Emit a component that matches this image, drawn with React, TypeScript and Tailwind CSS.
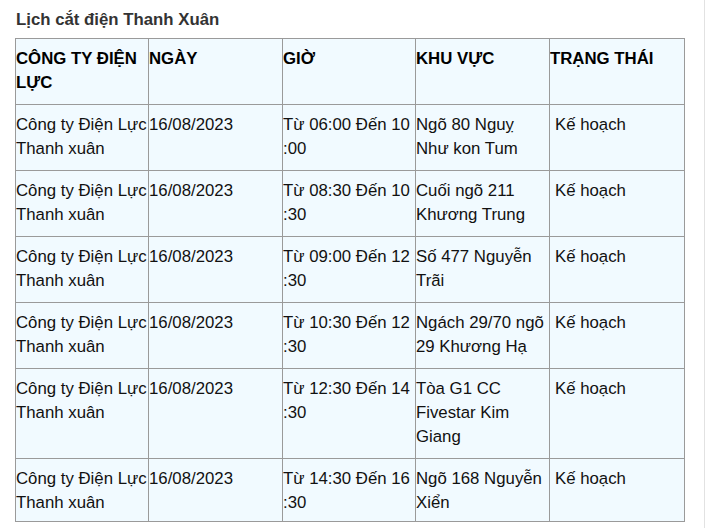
import React from "react";

interface Row {
  company: string[];
  date: string;
  time: string[];
  area: string[];
  status: string;
}

const rows: Row[] = [
  { company: ["Công ty Điện Lực", "Thanh xuân"], date: "16/08/2023", time: ["Từ 06:00 Đến 10", ":00"], area: ["Ngõ 80 Nguỵ", "Như kon Tum"], status: "Kế hoạch" },
  { company: ["Công ty Điện Lực", "Thanh xuân"], date: "16/08/2023", time: ["Từ 08:30 Đến 10", ":30"], area: ["Cuối ngõ 211", "Khương Trung"], status: "Kế hoạch" },
  { company: ["Công ty Điện Lực", "Thanh xuân"], date: "16/08/2023", time: ["Từ 09:00 Đến 12", ":30"], area: ["Số 477 Nguyễn", "Trãi"], status: "Kế hoạch" },
  { company: ["Công ty Điện Lực", "Thanh xuân"], date: "16/08/2023", time: ["Từ 10:30 Đến 12", ":30"], area: ["Ngách 29/70 ngõ", "29 Khương Hạ"], status: "Kế hoạch" },
  { company: ["Công ty Điện Lực", "Thanh xuân"], date: "16/08/2023", time: ["Từ 12:30 Đến 14", ":30"], area: ["Tòa G1 CC", "Fivestar Kim", "Giang"], status: "Kế hoạch" },
  { company: ["Công ty Điện Lực", "Thanh xuân"], date: "16/08/2023", time: ["Từ 14:30 Đến 16", ":30"], area: ["Ngõ 168 Nguyễn", "Xiển"], status: "Kế hoạch" },
];

const Lines: React.FC<{ lines: string[] }> = ({ lines }) => (
  <>
    {lines.map((l, i) => (
      <React.Fragment key={i}>
        {i > 0 && <br />}
        {l}
      </React.Fragment>
    ))}
  </>
);

const cell =
  "border border-[#9a9a9a] bg-[#f1faff] align-top pt-[8px] pb-[9px] last:pb-[9px] px-0 whitespace-nowrap overflow-hidden";

export default function App() {
  return (
    <div
      className="min-h-screen w-[705px] bg-white border-r border-[#e2e2e2] text-[16.8px] leading-[24px] text-black"
      style={{ fontFamily: '"Liberation Sans", Arial, sans-serif' }}
    >
      <h3 className="pt-[8px] pl-[16px] font-bold text-[#333] text-[16.8px] leading-[24px]">
        Lịch cắt điện Thanh Xuân
      </h3>
      <table className="mt-[6px] ml-[15px] w-[669px] table-fixed border-collapse">
        <colgroup>
          <col className="w-[133px]" />
          <col className="w-[134px]" />
          <col className="w-[133px]" />
          <col className="w-[134px]" />
          <col className="w-[135px]" />
        </colgroup>
        <thead>
          <tr className="text-left font-bold">
            <th className={cell}>
              <Lines lines={["CÔNG TY ĐIỆN", "LỰC"]} />
            </th>
            <th className={cell}>NGÀY</th>
            <th className={cell}>GIỜ</th>
            <th className={cell}>KHU VỰC</th>
            <th className={cell}>TRẠNG THÁI</th>
          </tr>
        </thead>
        <tbody>
          {rows.map((r, i) => {
            const pad = i === rows.length - 1 ? " !pb-[6px]" : "";
            return (
              <tr key={i} className="text-[#111]">
                <td className={cell + pad}>
                  <Lines lines={r.company} />
                </td>
                <td className={cell + pad}>{r.date}</td>
                <td className={cell + pad}>
                  <Lines lines={r.time} />
                </td>
                <td className={cell + pad}>
                  <Lines lines={r.area} />
                </td>
                <td className={`${cell}${pad} pl-[5px]`}>{r.status}</td>
              </tr>
            );
          })}
        </tbody>
      </table>
    </div>
  );
}
